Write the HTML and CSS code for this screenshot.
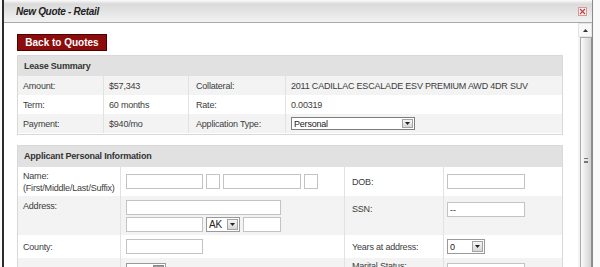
FILE: index.html
```html
<!DOCTYPE html>
<html lang="en-US">

<head>
    <meta charset="UTF-8">
    <meta name="viewport" content="width=device-width">

    <title>New Quote - Retail</title>

    <link rel="stylesheet" href="styles.css">

</head>

<body>
    <div class="frame">
        <div class="titlebar">
            <span class="title">New Quote - Retail</span>
            <span class="close">
                <svg width="7" height="7" viewBox="0 0 7 7"><path d="M1 1L6 6M6 1L1 6" stroke="#c43a3a" stroke-width="1.1"/></svg>
            </span>
        </div>
        <div class="main">
            <div class="content">
                <button class="back">Back to Quotes</button>

                <!-- lease summary -->
                <div class="panel lease">
                    <div class="head">Lease Summary</div>
                    <div class="row alt">
                        <div>Amount:</div>
                        <div>$57,343</div>
                        <div>Collateral:</div>
                        <div>2011 CADILLAC ESCALADE ESV PREMIUM AWD 4DR SUV</div>
                    </div>
                    <div class="row">
                        <div>Term:</div>
                        <div>60 months</div>
                        <div>Rate:</div>
                        <div>0.00319</div>
                    </div>
                    <div class="row alt">
                        <div>Payment:</div>
                        <div>$940/mo</div>
                        <div>Application Type:</div>
                        <div>
                            <span class="select sel-type"><span class="val">Personal</span><span class="arrow"><svg width="5" height="3" viewBox="0 0 5 3"><path d="M0 0H5L2.5 3Z" fill="#222"/></svg></span></span>
                        </div>
                    </div>
                </div>

                <!-- applicant -->
                <div class="panel applicant">
                    <div class="head">Applicant Personal Information</div>
                    <div class="row r-name">
                        <div class="lbl2">Name:<br>(First/Middle/Last/Suffix)</div>
                        <div>
                            <div class="line">
                                <input type="text" class="w77">
                                <input type="text" class="w14">
                                <input type="text" class="w78">
                                <input type="text" class="w14">
                            </div>
                        </div>
                        <div>DOB:</div>
                        <div><input type="text" class="w78"></div>
                    </div>
                    <div class="row alt r-addr">
                        <div class="top">Address:</div>
                        <div class="stack">
                            <div class="line"><input type="text" class="w155"></div>
                            <div class="line">
                                <input type="text" class="w77">
                                <span class="select sel-st"><span class="val">AK</span><span class="arrow"><svg width="5" height="3" viewBox="0 0 5 3"><path d="M0 0H5L2.5 3Z" fill="#222"/></svg></span></span>
                                <input type="text" class="w38">
                            </div>
                        </div>
                        <div class="top ssn">SSN:</div>
                        <div class="top ssn"><input type="text" class="w78" value="--"></div>
                    </div>
                    <div class="row r-county">
                        <div>County:</div>
                        <div><input type="text" class="w77"></div>
                        <div>Years at address:</div>
                        <div>
                            <span class="select sel-yr"><span class="val">0</span><span class="arrow"><svg width="5" height="3" viewBox="0 0 5 3"><path d="M0 0H5L2.5 3Z" fill="#222"/></svg></span></span>
                        </div>
                    </div>
                    <div class="row alt r-marital">
                        <div></div>
                        <div>
                            <span class="select sel-gen"><span class="val"></span><span class="arrow dark"></span></span>
                        </div>
                        <div class="top marital">Marital Status:</div>
                        <div><input type="text" class="w78"></div>
                    </div>
                </div>
            </div>

            <div class="scrollbar">
                <div class="sb-up">
                    <svg width="5" height="3" viewBox="0 0 5 3"><path d="M0 3H5L2.5 0Z" fill="#333"/></svg>
                </div>
                <div class="sb-thumb">
                    <span class="grip"></span>
                </div>
            </div>
        </div>
    </div>
</body>

</html>
```

FILE: styles.css
```css
html,
body {
    margin: 0;
    height: 267px;
    overflow: hidden;
}

body {
    background-color: #fafafa;
    font-family: "Liberation Sans", Arial, sans-serif;
    font-size: 9px;
    letter-spacing: -0.2px;
    color: #3c3c3c;
}

.frame {
    margin-left: 2px;
    width: 588px;
    height: 267px;
    border-left: 2px solid #2c2c2c;
    border-right: 1px solid #8a8a8a;
    background-color: #fff;
    display: flex;
    flex-direction: column;
}

.titlebar {
    height: 22px;
    flex: none;
    border-bottom: 1px solid #a9a9a9;
    background: linear-gradient(#fbfbfb, #dadada 4px, #f2f2f2);
    display: flex;
    align-items: center;
    justify-content: space-between;
    padding: 0 5px 0 12px;
}

.title {
    font-size: 10px;
    font-weight: bold;
    font-style: italic;
    letter-spacing: -0.3px;
    color: #222;
}

.close {
    width: 9px;
    height: 9px;
    box-sizing: border-box;
    border: 1px solid #d59a9a;
    background-color: #fbeeee;
    display: flex;
    align-items: center;
    justify-content: center;
}

.close svg {
    display: block;
}

.main {
    flex: 1;
    display: flex;
    min-height: 0;
}

.content {
    flex: 1;
    padding: 11px 15px 0 13px;
    overflow: hidden;
}

.back {
    display: block;
    width: 90px;
    height: 17px;
    padding: 0;
    margin: 0;
    border: 1px solid #4e0000;
    background-color: #8c0c0c;
    color: #fff;
    font-family: "Liberation Sans", Arial, sans-serif;
    font-size: 10px;
    font-weight: bold;
    letter-spacing: 0;
}

.panel {
    border: 1px solid #d8d8d8;
    background-color: #fff;
    margin-top: 4px;
}

.panel.lease {
    padding-bottom: 1px;
}

.panel.applicant {
    margin-top: 10px;
}

.head {
    height: 20px;
    line-height: 20px;
    padding-left: 6px;
    background-color: #e1e1e1;
    font-weight: bold;
    color: #333;
}

.applicant .head {
    height: 21px;
    line-height: 21px;
}

.row {
    display: grid;
    height: 19px;
}

.row.alt {
    background-color: #f3f3f3;
}

.row > div {
    box-sizing: border-box;
    border-left: 1px solid #e2e2e2;
    padding-left: 5px;
    display: flex;
    align-items: center;
    white-space: nowrap;
}

.row > div:first-child {
    border-left: 0;
}

.row > div:nth-child(3) {
    padding-left: 7px;
}

.lease .row {
    grid-template-columns: 85px 85px 97px 1fr;
}

.applicant .row {
    grid-template-columns: 102px 224px 99px 1fr;
}

.applicant .row > div:nth-child(4) {
    padding-left: 3px;
}

.r-name {
    height: 29px;
}

.r-addr {
    height: 39px;
}

.r-county {
    height: 23px;
}

.r-marital {
    height: 25px;
}

.lbl2 {
    line-height: 12px;
}

.row > div.top {
    align-items: flex-start;
    padding-top: 4px;
    line-height: 12px;
}

.row > div.ssn {
    padding-top: 6px;
    line-height: 15px;
}

.row > div.marital {
    padding-top: 2px;
}

.row > div.stack {
    flex-direction: column;
    align-items: flex-start;
    justify-content: flex-start;
    padding-top: 4px;
    gap: 2px;
}

.line {
    display: flex;
    gap: 3px;
}

input {
    display: block;
    box-sizing: border-box;
    height: 15px;
    margin: 0;
    padding: 0 2px;
    border: 1px solid #c3c3c3;
    background-color: #fff;
    font-family: "Liberation Sans", Arial, sans-serif;
    font-size: 9px;
    color: #333;
}

.w14 { width: 14px; }
.w38 { width: 38px; }
.w77 { width: 77px; }
.w78 { width: 78px; }
.w155 { width: 155px; }

.select {
    display: inline-flex;
    align-items: center;
    box-sizing: border-box;
    height: 15px;
    border: 1px solid #9a9a9a;
    background-color: #fff;
    padding-left: 2px;
    color: #222;
}

.select .arrow {
    margin-left: auto;
    margin-right: 1px;
    width: 11px;
    height: 11px;
    box-sizing: border-box;
    border: 1px solid #a3a3a3;
    background: linear-gradient(#f6f6f6, #d6d6d6);
    display: flex;
    align-items: center;
    justify-content: center;
}

.select .arrow.dark {
    background: #9c9c9c;
    border-color: #888;
}

.select .arrow svg {
    display: block;
}

.sel-type {
    width: 124px;
    height: 13px;
    border-color: #7e7e7e;
}

.sel-type .arrow {
    width: 11px;
    height: 9px;
}

.sel-st {
    width: 34px;
    font-size: 10px;
}

.sel-yr {
    width: 38px;
}

.sel-gen {
    width: 40px;
}

.scrollbar {
    width: 14px;
    flex: none;
    display: flex;
    flex-direction: column;
    background-color: #f3f3f3;
}

.sb-up {
    height: 14px;
    flex: none;
    border: 1px solid #e4e4e4;
    box-sizing: border-box;
    background-color: #f8f8f8;
    display: flex;
    align-items: center;
    justify-content: center;
}

.sb-thumb {
    height: 246px;
    flex: none;
    margin-left: 2px;
    box-sizing: border-box;
    border: 1px solid #ababab;
    border-right-color: #8e8e8e;
    background: linear-gradient(to right, #fbfbfb, #d2d2d2);
    display: flex;
    align-items: center;
    justify-content: center;
}

.grip {
    width: 4px;
    height: 5px;
    border-top: 1px solid #777;
    border-bottom: 1px solid #777;
    background: linear-gradient(transparent 2px, #777 2px, #777 3px, transparent 3px);
    box-sizing: border-box;
}
```
